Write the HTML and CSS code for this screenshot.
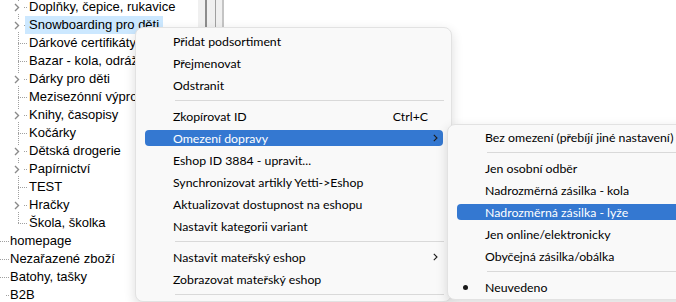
FILE: index.html
```html
<!DOCTYPE html>
<html lang="cs">
<head>
    <meta charset="UTF-8">
    <title>Kategorie</title>
    <link rel="stylesheet" href="styles.css">
</head>
<body>
    <div class="screen">
        <!-- Category tree -->
        <div class="tree">
            <div class="row child"><span class="twist"><svg width="6" height="9" viewBox="0 0 6 9"><path d="M1 1 L4.5 4.5 L1 8" fill="none" stroke="#8a8a8a" stroke-width="1.4"/></svg></span><span class="label">Doplňky, čepice, rukavice</span></div>
            <div class="row child"><span class="twist"><svg width="6" height="9" viewBox="0 0 6 9"><path d="M1 1 L4.5 4.5 L1 8" fill="none" stroke="#8a8a8a" stroke-width="1.4"/></svg></span><span class="label selected">Snowboarding pro děti</span></div>
            <div class="row child"><span class="gap"></span><span class="label">Dárkové certifikáty</span></div>
            <div class="row child"><span class="gap"></span><span class="label">Bazar - kola, odrážedla</span></div>
            <div class="row child"><span class="twist"><svg width="6" height="9" viewBox="0 0 6 9"><path d="M1 1 L4.5 4.5 L1 8" fill="none" stroke="#8a8a8a" stroke-width="1.4"/></svg></span><span class="label">Dárky pro děti</span></div>
            <div class="row child"><span class="gap"></span><span class="label">Mezisezónní výprodej</span></div>
            <div class="row child"><span class="twist"><svg width="6" height="9" viewBox="0 0 6 9"><path d="M1 1 L4.5 4.5 L1 8" fill="none" stroke="#8a8a8a" stroke-width="1.4"/></svg></span><span class="label">Knihy, časopisy</span></div>
            <div class="row child"><span class="gap"></span><span class="label">Kočárky</span></div>
            <div class="row child"><span class="twist"><svg width="6" height="9" viewBox="0 0 6 9"><path d="M1 1 L4.5 4.5 L1 8" fill="none" stroke="#8a8a8a" stroke-width="1.4"/></svg></span><span class="label">Dětská drogerie</span></div>
            <div class="row child"><span class="twist"><svg width="6" height="9" viewBox="0 0 6 9"><path d="M1 1 L4.5 4.5 L1 8" fill="none" stroke="#8a8a8a" stroke-width="1.4"/></svg></span><span class="label">Papírnictví</span></div>
            <div class="row child"><span class="gap"></span><span class="label">TEST</span></div>
            <div class="row child"><span class="twist"><svg width="6" height="9" viewBox="0 0 6 9"><path d="M1 1 L4.5 4.5 L1 8" fill="none" stroke="#8a8a8a" stroke-width="1.4"/></svg></span><span class="label">Hračky</span></div>
            <div class="row child last"><span class="gap"></span><span class="label">Škola, školka</span></div>
            <div class="row top"><span class="gap-top"></span><span class="label">homepage</span></div>
            <div class="row top"><span class="gap-top"></span><span class="label">Nezařazené zboží</span></div>
            <div class="row top"><span class="gap-top"></span><span class="label">Batohy, tašky</span></div>
            <div class="row top short"><span class="gap-top"></span><span class="label">B2B</span></div>
        </div>
        <!-- Splitter -->
        <div class="splitter">
            <div class="split-a"></div>
            <div class="split-b"></div>
            <div class="split-c"></div>
        </div>
        <div class="pane"></div>
    </div>

    <!-- Context menu -->
    <div class="menu main-menu">
        <div class="item"><span>Přidat podsortiment</span></div>
        <div class="item"><span>Přejmenovat</span></div>
        <div class="item"><span>Odstranit</span></div>
        <div class="sep"></div>
        <div class="item"><span>Zkopírovat ID</span><span class="key">Ctrl+C</span></div>
        <div class="item active"><span>Omezení dopravy</span><svg class="arrow" width="5" height="8" viewBox="0 0 5 8"><path d="M0.8 0.8 L4 4 L0.8 7.2" fill="none" stroke="#1c1c1c" stroke-width="1.1"/></svg></div>
        <div class="item"><span>Eshop ID 3884 - upravit...</span></div>
        <div class="item"><span>Synchronizovat artikly Yetti-&gt;Eshop</span></div>
        <div class="item"><span>Aktualizovat dostupnost na eshopu</span></div>
        <div class="item"><span>Nastavit kategorii variant</span></div>
        <div class="sep"></div>
        <div class="item"><span>Nastavit mateřský eshop</span><svg class="arrow" width="5" height="8" viewBox="0 0 5 8"><path d="M0.8 0.8 L4 4 L0.8 7.2" fill="none" stroke="#1c1c1c" stroke-width="1.1"/></svg></div>
        <div class="item"><span>Zobrazovat mateřský eshop</span></div>
        <div class="sep"></div>
    </div>

    <!-- Submenu -->
    <div class="menu sub-menu">
        <div class="item"><span>Bez omezení (přebíjí jiné nastavení)</span></div>
        <div class="sep"></div>
        <div class="item"><span>Jen osobní odběr</span></div>
        <div class="item"><span>Nadrozměrná zásilka - kola</span></div>
        <div class="item active"><span>Nadrozměrná zásilka - lyže</span></div>
        <div class="item"><span>Jen online/elektronicky</span></div>
        <div class="item"><span>Obyčejná zásilka/obálka</span></div>
        <div class="sep"></div>
        <div class="item checked"><span>Neuvedeno</span></div>
    </div>
</body>
</html>
```

FILE: styles.css
```css
body {
    margin: 0;
    padding: 0;
    background-color: white;
    overflow: hidden;
    width: 676px;
    height: 302px;
    position: relative;
}
.screen {
    display: flex;
    height: 302px;
}

/* Tree on the left */
.tree {
    width: 198px;
    margin-top: -2px;
    overflow: hidden;
    font-family: "Liberation Sans", Arial, sans-serif;
    font-size: 13px;
    color: #000;
}
.row {
    display: flex;
    height: 18px;
    line-height: 18px;
    white-space: nowrap;
}
.row.child {
    background:
        repeating-linear-gradient(90deg, #a0a0a0 0 1px, transparent 1px 2px) 18px 9px / 9px 1px no-repeat,
        repeating-linear-gradient(180deg, #a0a0a0 0 1px, transparent 1px 2px) 18px 0 / 1px 100% no-repeat;
}
.row.child.last {
    background:
        repeating-linear-gradient(90deg, #a0a0a0 0 1px, transparent 1px 2px) 18px 9px / 9px 1px no-repeat,
        repeating-linear-gradient(180deg, #a0a0a0 0 1px, transparent 1px 2px) 18px 0 / 1px 10px no-repeat;
}
.row.top {
    background: repeating-linear-gradient(90deg, #a0a0a0 0 1px, transparent 1px 2px) 0 9px / 10px 1px no-repeat;
}
.row.top.short {
    background: repeating-linear-gradient(90deg, #a0a0a0 0 1px, transparent 1px 2px) 6px 9px / 3px 1px no-repeat;
}
.twist {
    width: 25px;
    display: flex;
    align-items: center;
    padding-left: 13px;
    box-sizing: border-box;
}
.twist svg {
    background-color: white;
    padding: 2px 3px 2px 1px;
}
.gap {
    width: 25px;
}
.gap-top {
    width: 6px;
}
.label {
    padding: 0 4px;
}
.label.selected {
    background-color: #cce8ff;
}

/* Splitter between panes */
.splitter {
    width: 26px;
    background-color: #f0f0f0;
    display: flex;
}
.split-a {
    margin-left: 7px;
    width: 2px;
    background-color: #8c8c8c;
}
.split-b {
    margin-left: 8px;
    width: 1px;
    background-color: #a0a0a0;
}
.split-c {
    margin-left: 6px;
    width: 2px;
    background-color: #c4c4c4;
}
.pane {
    flex: 1;
}

/* Context menus */
.menu {
    position: absolute;
    background-color: #f9f9f9;
    border: 1px solid #e2e2e2;
    border-radius: 8px;
    box-shadow: 0 4px 12px rgba(0, 0, 0, 0.14);
    font-family: Lato, "Segoe UI", sans-serif;
    font-size: 12.3px;
    color: #000;
    padding: 2px 0;
}
.main-menu {
    left: 135px;
    top: 27px;
    width: 315px;
}
.sub-menu {
    left: 447px;
    top: 124px;
    width: 260px;
    padding-top: 1px;
    padding-bottom: 1px;
}
.item {
    height: 22px;
    margin: 0 8px 0 9px;
    padding-left: 28px;
    padding-right: 5px;
    display: flex;
    align-items: center;
    position: relative;
    white-space: nowrap;
}
.item.active::before {
    content: "";
    position: absolute;
    left: 0;
    right: 0;
    top: 3px;
    bottom: 3px;
    background-color: #3478d1;
    border-radius: 4px;
}
.item span,
.item svg {
    position: relative;
}
.item.active span {
    color: white;
}
.key {
    margin-left: auto;
    margin-right: 10px;
}
.arrow {
    margin-left: auto;
}
.item.checked::after {
    content: "";
    position: absolute;
    left: 6px;
    top: 9px;
    width: 5px;
    height: 5px;
    border-radius: 50%;
    background-color: #1a1a1a;
}
.sep {
    height: 1px;
    margin: 4px 7px 4px 39px;
    background-color: #d9d9d9;
}
.sub-menu .sep {
    margin-right: 0;
}
```
